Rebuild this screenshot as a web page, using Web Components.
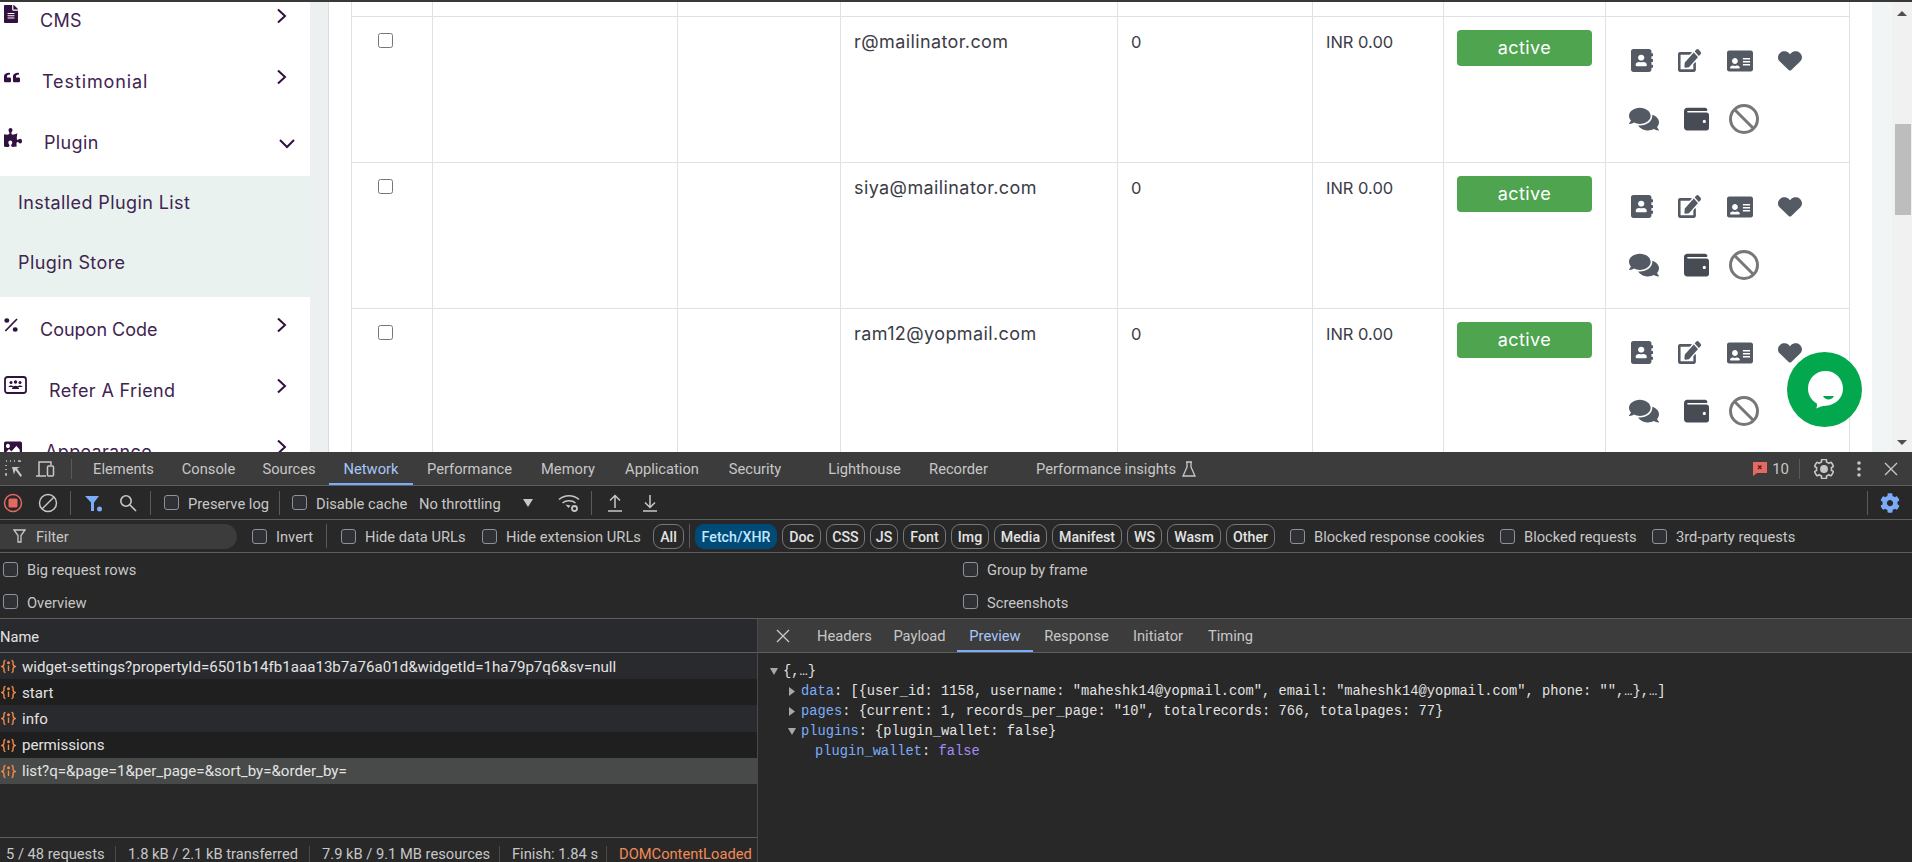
<!DOCTYPE html>
<html>
<head>
<meta charset="utf-8">
<title>Users</title>
<style>
html, body { margin: 0; padding: 0; height: 862px; overflow: hidden; background: #fff; }
</style>
</head>
<body>
<app-page></app-page>
<dev-tools></dev-tools>
<script>
const FA = {
    file: [384, "M224 136V0H24C10.7 0 0 10.7 0 24v464c0 13.3 10.7 24 24 24h336c13.3 0 24-10.7 24-24V160H248c-13.2 0-24-10.8-24-24zm64 236c0 6.6-5.4 12-12 12H108c-6.6 0-12-5.4-12-12v-8c0-6.6 5.4-12 12-12h168c6.6 0 12 5.4 12 12v8zm0-64c0 6.6-5.4 12-12 12H108c-6.6 0-12-5.4-12-12v-8c0-6.6 5.4-12 12-12h168c6.6 0 12 5.4 12 12v8zm0-72v8c0 6.6-5.4 12-12 12H108c-6.6 0-12-5.4-12-12v-8c0-6.6 5.4-12 12-12h168c6.6 0 12 5.4 12 12zm96-114.1v6.1H256V0h6.1c6.4 0 12.5 2.5 17 7l97.9 98c4.5 4.5 7 10.6 7 16.9z"],
    quote: [512, "M464 256h-80v-64c0-35.3 28.7-64 64-64h8c13.3 0 24-10.7 24-24V56c0-13.3-10.7-24-24-24h-8c-88.4 0-160 71.6-160 160v240c0 26.5 21.5 48 48 48h128c26.5 0 48-21.5 48-48V304c0-26.5-21.5-48-48-48zm-288 0H96v-64c0-35.3 28.7-64 64-64h8c13.3 0 24-10.7 24-24V56c0-13.3-10.7-24-24-24h-8C71.6 32 0 103.6 0 192v240c0 26.5 21.5 48 48 48h128c26.5 0 48-21.5 48-48V304c0-26.5-21.5-48-48-48z"],
    puzzle: [576, "M519.442 288.651c-41.519 0-59.5 31.593-82.058 31.593C377.409 320.244 432 144 432 144s-196.288 80-196.288-3.297c0-35.827 36.288-46.25 36.288-85.985C272 19.216 243.885 0 210.539 0c-34.654 0-66.366 18.891-66.366 56.346 0 41.364 31.711 59.277 31.711 81.75C175.885 207.719 0 166.758 0 166.758v333.237s178.635 41.047 178.635-28.662c0-22.473-40-40.107-40-81.471 0-37.456 29.25-56.346 63.577-56.346 33.673 0 61.788 19.216 61.788 54.717 0 39.735-36.288 50.158-36.288 85.985 0 60.803 129.675 25.73 181.23 25.73 0 0-34.725-120.101 25.827-120.101 35.962 0 46.423 36.152 86.308 36.152C556.712 416 576 387.99 576 354.443c0-34.199-18.962-65.792-56.558-65.792z"],
    percent: [448, "M90 10a80 80 0 1 0 0 160a80 80 0 1 0 0-160zM358 340a80 80 0 1 0 0 160a80 80 0 1 0 0-160zM396 20l40 32L62 492l-40-32z"],
    image: [512, "M464 448H48c-26.51 0-48-21.49-48-48V112c0-26.51 21.49-48 48-48h416c26.51 0 48 21.49 48 48v288c0 26.51-21.49 48-48 48zM112 120c-30.928 0-56 25.072-56 56s25.072 56 56 56 56-25.072 56-56-25.072-56-56-56zM64 384h384V272l-87.515-87.515c-4.686-4.686-12.284-4.686-16.971 0L208 320l-55.515-55.515c-4.686-4.686-12.284-4.686-16.971 0L64 336v48z"],
    book: [448, "M436 160c6.6 0 12-5.4 12-12v-40c0-6.600-5.400-12-12-12h-20V48c0-26.500-21.500-48-48-48H48C21.500 0 0 21.500 0 48v416c0 26.500 21.500 48 48 48h320c26.500 0 48-21.500 48-48v-48h20c6.600 0 12-5.400 12-12v-40c0-6.600-5.400-12-12-12h-20v-64h20c6.600 0 12-5.400 12-12v-40c0-6.600-5.400-12-12-12h-20v-64h20zm-228-32c35.300 0 64 28.700 64 64s-28.700 64-64 64-64-28.700-64-64 28.700-64 64-64zm112 236.800c0 10.600-10 19.200-22.400 19.200H118.400C106 384 96 375.400 96 364.800v-19.200c0-31.800 30.100-57.600 67.200-57.600h5c12.300 5.100 25.700 8 39.800 8s27.600-2.900 39.800-8h5c37.100 0 67.200 25.800 67.200 57.600v19.200z"],
    edit: [576, "M402.6 83.2l90.2 90.2c3.8 3.8 3.8 10 0 13.8L274.4 405.6l-92.8 10.3c-12.4 1.4-22.9-9.1-21.5-21.5l10.3-92.8L388.8 83.2c3.8-3.8 10-3.8 13.8 0zm162-22.9l-48.8-48.8c-15.2-15.2-39.9-15.2-55.2 0l-35.4 35.4c-3.8 3.8-3.8 10 0 13.8l90.2 90.2c3.8 3.8 10 3.8 13.8 0l35.4-35.4c15.2-15.3 15.2-40 0-55.2zM384 346.2V448H64V128h229.8c3.2 0 6.2-1.3 8.5-3.5l40-40c7.6-7.6 2.2-20.5-8.5-20.5H48C21.5 64 0 85.5 0 112v352c0 26.5 21.5 48 48 48h352c26.5 0 48-21.5 48-48V306.2c0-10.7-12.9-16-20.500-8.500l-40 40c-2.200 2.300-3.500 5.300-3.500 8.500z"],
    card: [576, "M528 32H48C21.5 32 0 53.5 0 80v60h576V80c0-26.5-21.500-48-48-48zM0 432c0 26.500 21.500 48 48 48h480c26.500 0 48-21.500 48-48V128H0v304zm352-232c0-4.400 3.600-8 8-8h144c4.400 0 8 3.600 8 8v16c0 4.400-3.600 8-8 8H360c-4.400 0-8-3.600-8-8v-16zm0 64c0-4.400 3.600-8 8-8h144c4.400 0 8 3.600 8 8v16c0 4.400-3.600 8-8 8H360c-4.400 0-8-3.600-8-8v-16zm0 64c0-4.400 3.600-8 8-8h144c4.400 0 8 3.600 8 8v16c0 4.400-3.600 8-8 8H360c-4.400 0-8-3.600-8-8v-16zM176 192c35.300 0 64 28.700 64 64s-28.700 64-64 64-64-28.700-64-64 28.700-64 64-64zM67.100 396.200C75.500 370.500 99.600 352 128 352h8.200c12.300 5.100 25.700 8 39.800 8s27.600-2.900 39.800-8h8.200c28.400 0 52.500 18.500 60.900 44.200 3.200 9.900-5.200 19.800-15.600 19.800H82.700c-10.400 0-18.800-10-15.600-19.800z"],
    heart: [512, "M462.3 62.6C407.5 15.9 326 24.3 275.700 76.200L256 96.500l-19.700-20.300C186.100 24.300 104.500 15.900 49.700 62.600c-62.800 53.600-66.100 149.800-9.900 207.900l193.500 199.800c12.500 12.900 32.800 12.900 45.300 0l193.500-199.800c56.300-58.100 53-154.300-9.900-207.900z"],
    comments: [576, "M416 192c0-88.400-93.100-160-208-160S0 103.600 0 192c0 34.300 14.100 65.900 38 92-13.400 30.200-35.500 54.200-35.800 54.500-2.200 2.300-2.800 5.700-1.500 8.700S4.800 352 8 352c36.600 0 66.900-12.300 88.700-25 32.200 15.700 70.300 25 111.300 25 114.900 0 208-71.600 208-160zm122 220c23.900-26 38-57.700 38-92 0-66.900-53.500-124.200-129.300-148.100.9 6.600 1.300 13.300 1.300 20.100 0 105.900-107.700 192-240 192-10.800 0-21.300-.8-31.700-1.900C207.800 439.600 281.800 480 368 480c41 0 79.100-9.200 111.300-25 21.800 12.700 52.100 25 88.700 25 3.200 0 6.100-1.900 7.400-4.800 1.300-3 .7-6.400-1.500-8.700-.3-.3-22.400-24.200-35.800-54.500z"],
    wallet: [512, "M461.200 128H80c-8.840 0-16-7.160-16-16s7.160-16 16-16h384c8.840 0 16-7.160 16-16 0-26.510-21.490-48-48-48H64C28.650 32 0 60.650 0 96v320c0 35.350 28.650 64 64 64h397.200c28.020 0 50.800-21.530 50.800-48V176c0-26.470-22.780-48-50.800-48zM416 336c-17.670 0-32-14.330-32-32s14.330-32 32-32 32 14.330 32 32-14.330 32-32 32z"],
    cog: [512, "M487.400 315.700l-42.600-24.600c4.300-23.200 4.300-47 0-70.200l42.600-24.600c4.900-2.800 7.100-8.600 5.500-14-11.100-35.600-30-67.800-54.700-94.600-3.800-4.100-10-5.100-14.800-2.300L380.800 110c-17.900-15.400-38.500-27.300-60.800-35.100V25.800c0-5.600-3.900-10.500-9.400-11.700-36.700-8.200-74.300-7.800-109.200 0-5.500 1.200-9.400 6.100-9.400 11.700V75c-22.200 7.900-42.800 19.800-60.800 35.100L88.700 85.500c-4.900-2.800-11-1.900-14.800 2.300-24.700 26.700-43.600 58.900-54.700 94.600-1.700 5.400.6 11.200 5.500 14L67.300 221c-4.300 23.200-4.300 47 0 70.200l-42.600 24.600c-4.900 2.800-7.100 8.600-5.500 14 11.100 35.600 30 67.800 54.700 94.600 3.800 4.100 10 5.100 14.800 2.300l42.600-24.600c17.900 15.400 38.500 27.300 60.800 35.100v49.200c0 5.600 3.900 10.500 9.400 11.700 36.700 8.200 74.300 7.800 109.200 0 5.500-1.200 9.400-6.100 9.400-11.700v-49.200c22.200-7.900 42.800-19.800 60.800-35.100l42.600 24.600c4.900 2.800 11 1.900 14.800-2.300 24.700-26.700 43.600-58.900 54.700-94.600 1.500-5.500-.7-11.300-5.600-14.100zM256 336c-44.100 0-80-35.900-80-80s35.900-80 80-80 80 35.900 80 80-35.900 80-80 80z"]
};
const fa = (name, w, h, color) => `<svg width="${w}" height="${h}" viewBox="0 0 ${FA[name][0]} 512" preserveAspectRatio="none" style="display:block;flex:none"><path fill="${color}" d="${FA[name][1]}"/></svg>`;

class NavItem extends HTMLElement {
    connectedCallback() {
        const icon = this.getAttribute("icon");
        const [w, h] = this.getAttribute("size").split(",");
        const open = this.hasAttribute("open");
        const glyph = icon === "refer"
            ? `<svg width="23" height="18" viewBox="0 0 23 18" style="display:block"><rect x="1" y="1" width="21" height="16" rx="2.500" fill="none" stroke="#32103f" stroke-width="1.800"/><g fill="#32103f"><circle cx="7" cy="6.500" r="1.500"/><circle cx="11.500" cy="6" r="1.700"/><circle cx="16" cy="6.500" r="1.500"/><path d="M4.500 11c0-2 5-2 5 0zM8 13c0-4.500 7-4.500 7 0zM13.500 11c0-2 5-2 5 0z"/></g></svg>`
            : fa(icon, w, h, "#32103f");
        this.attachShadow({mode: "open"}).innerHTML = `
        <style>
        :host { display: flex; align-items: center; height: 61px; padding-left: 4px; box-sizing: border-box; position: relative; font: 18px Inter, sans-serif; letter-spacing: .35px; color: #3f2450; }
        .icon { width: 0; height: ${h}px; margin-bottom: ${this.getAttribute("lift") || 13}px; display: block; }
        .text { margin-left: ${this.getAttribute("x")}px; margin-top: -1px; }
        .arrow { margin-left: auto; margin-right: ${open ? 14 : 23}px; margin-bottom: ${open ? -2 : 10}px; }
        </style>
        <span class="icon">${glyph}</span>
        <span class="text"><slot></slot></span>
        <svg class="arrow" width="${open ? 18 : 11}" height="${open ? 11 : 16}" viewBox="${open ? "0 0 18 11" : "0 0 11 16"}"><path d="${open ? "M2 2l7 7 7-7" : "M2 1.500l7 6.500-7 6.500"}" fill="none" stroke="#32103f" stroke-width="2"/></svg>`;
    }
}
customElements.define("nav-item", NavItem);

class SubItem extends HTMLElement {
    constructor() {
        super();
        this.attachShadow({mode: "open"}).innerHTML = `
        <style>
        :host { display: flex; align-items: center; height: 60.500px; box-sizing: border-box; padding: 0 0 8px 18px; font: 18px Inter, sans-serif; letter-spacing: .4px; color: #3f2450; }
        </style>
        <slot></slot>`;
    }
}
customElements.define("sub-item", SubItem);

class AppSidebar extends HTMLElement {
    constructor() {
        super();
        this.attachShadow({mode: "open"}).innerHTML = `
        <style>
        :host { display: block; width: 310px; flex: none; background: #fff; overflow: hidden; }
        .list { margin-top: -12px; }
        .sub { background: #e9f2ee; margin: 3px 0 2px; }
        </style>
        <div class="list">
            <nav-item icon="file" size="14,18" x="36">CMS</nav-item>
            <nav-item icon="quote" size="16,11" x="38" lift="9" style="letter-spacing:.9px">Testimonial</nav-item>
            <nav-item icon="puzzle" size="18,19" x="40" lift="11" open>Plugin</nav-item>
            <div class="sub">
                <sub-item>Installed Plugin List</sub-item>
                <sub-item>Plugin Store</sub-item>
            </div>
            <nav-item icon="percent" size="14,14" x="36" lift="10" style="letter-spacing:0">Coupon Code</nav-item>
            <nav-item icon="refer" size="23,18" x="45" lift="11">Refer A Friend</nav-item>
            <nav-item icon="image" size="18,20" x="41" lift="6">Appearance</nav-item>
        </div>`;
    }
}
customElements.define("app-sidebar", AppSidebar);

class ActionIcons extends HTMLElement {
    constructor() {
        super();
        const c = "#545a64";
        this.attachShadow({mode: "open"}).innerHTML = `
        <style>
        :host { display: block; padding-top: 14px; }
        .line { display: flex; align-items: center; height: 59px; }
        .b { margin-top: -1px; }
        .a svg:nth-child(1) { margin-left: 25px; }
        .a svg:nth-child(2) { margin-left: 25px; }
        .a svg:nth-child(3) { margin-left: 26px; }
        .a svg:nth-child(4) { margin-left: 25px; }
        .b svg:nth-child(1) { margin-left: 23px; }
        .b svg:nth-child(2) { margin-left: 25px; }
        .b svg:nth-child(3) { margin-left: 20px; }
        </style>
        <div class="line a">${fa("book", 22, 23, c)}${fa("edit", 23, 23, c)}${fa("card", 26, 24, c)}${fa("heart", 24, 22, c)}</div>
        <div class="line b">${fa("comments", 30, 26, c)}${fa("wallet", 25, 26, "#474b54")}
            <svg width="30" height="30" viewBox="0 0 30 30" style="display:block"><circle cx="15" cy="15" r="13.500" fill="none" stroke="#777" stroke-width="3"/><path d="M5.500 5.500l19 19" stroke="#777" stroke-width="3"/></svg>
        </div>`;
    }
}
customElements.define("action-icons", ActionIcons);

class UserRow extends HTMLElement {
    constructor() {
        super();
        this.attachShadow({mode: "open"}).innerHTML = `
        <style>
        :host { display: grid; grid-template-columns: 81px 245px 163px 277px 195px 131px 162px 244px; width: 1499px; height: 146px; box-sizing: border-box; border-bottom: 1px solid #dee2e6; border-left: 1px solid #dee2e6; font: 18px Inter, sans-serif; letter-spacing: .4px; color: #3c3c46; }
        .cell { border-right: 1px solid #dee2e6; padding: 13px 0 0 13px; line-height: 24px; min-width: 0; }
        .check { padding: 0 0 0 26px; }
        .check i { display: block; width: 13px; height: 13px; margin-top: 16px; border: 1px solid #767676; border-radius: 2.500px; background: #fff; }
        .num { font-size: 16.500px; letter-spacing: 0; }
        .status { padding-left: 13px; }
        .status span { display: flex; align-items: center; justify-content: center; width: 135px; height: 36px; border-radius: 4px; background: #4ea44f; color: #fff; }
        .actions { padding: 0; }
        </style>
        <div class="cell check"><i></i></div>
        <div class="cell"></div>
        <div class="cell"></div>
        <div class="cell"><slot></slot></div>
        <div class="cell num">0</div>
        <div class="cell num">INR 0.00</div>
        <div class="cell status"><span>active</span></div>
        <div class="cell actions"><action-icons></action-icons></div>`;
    }
}
customElements.define("user-row", UserRow);

class UserTable extends HTMLElement {
    constructor() {
        super();
        this.attachShadow({mode: "open"}).innerHTML = `
        <style>
        :host { display: block; flex: 1; min-width: 0; padding-left: 22px; background: #fff; overflow: hidden; }
        .top { display: grid; grid-template-columns: 81px 245px 163px 277px 195px 131px 162px 244px; width: 1499px; height: 15px; box-sizing: border-box; border-bottom: 1px solid #dee2e6; border-left: 1px solid #dee2e6; }
        .top div { border-right: 1px solid #dee2e6; }
        </style>
        <div class="top"><div></div><div></div><div></div><div></div><div></div><div></div><div></div><div></div></div>
        <slot></slot>`;
    }
}
customElements.define("user-table", UserTable);

class PageScrollbar extends HTMLElement {
    constructor() {
        super();
        this.attachShadow({mode: "open"}).innerHTML = `
        <style>
        :host { display: flex; flex: none; width: 40px; }
        .gutter { width: 20px; background: #f2f5f6; }
        .bar { width: 20px; background: #f1f1f1; display: flex; flex-direction: column; align-items: center; padding-top: 9px; box-sizing: border-box; }
        .thumb { width: 16px; height: 91px; margin: 108px 0 0 2px; background: #bdbdbd; }
        .up, .down { width: 0; height: 0; border-left: 5px solid transparent; border-right: 5px solid transparent; }
        .up { border-bottom: 5px solid #505050; }
        .down { border-top: 5px solid #505050; margin-top: auto; margin-bottom: 7px; }
        </style>
        <div class="gutter"></div>
        <div class="bar"><i class="up"></i><i class="thumb"></i><i class="down"></i></div>`;
    }
}
customElements.define("page-scrollbar", PageScrollbar);

class ChatBubble extends HTMLElement {
    constructor() {
        super();
        this.attachShadow({mode: "open"}).innerHTML = `
        <style>
        :host { position: absolute; left: 1787px; top: 350px; width: 75px; height: 75px; display: block; }
        </style>
        <svg width="75" height="75" viewBox="0 0 75 75" style="display:block">
            <circle cx="37.500" cy="37.500" r="37.500" fill="#03a84e"/>
            <path d="M38.500 19c9.800 0 17.500 7.700 17.500 17.500 0 9.600-7.600 16.500-17 17.200-3.500.3-6.500 1.100-9.800 2.800.8-1.800 1-3.500.6-5.100C24.400 48.300 21 43 21 36.500 21 26.700 28.700 19 38.500 19z" fill="#fff"/>
            <path d="M36 44h11c-1 2.300-3 3.500-5.500 3.500S37 46.300 36 44z" fill="#03a84e"/>
        </svg>`;
    }
}
customElements.define("chat-bubble", ChatBubble);

class AppPage extends HTMLElement {
    constructor() {
        super();
        this.attachShadow({mode: "open"}).innerHTML = `
        <style>
        :host { display: flex; height: 452px; box-sizing: border-box; border-top: 2px solid #383838; overflow: hidden; position: relative; }
        .gutter { width: 18px; flex: none; background: #ecf0f1; border-right: 1px solid #dcdcdc; }
        </style>
        <app-sidebar></app-sidebar>
        <div class="gutter"></div>
        <user-table>
            <user-row>r@mailinator.com</user-row>
            <user-row>siya@mailinator.com</user-row>
            <user-row>ram12@yopmail.com</user-row>
        </user-table>
        <page-scrollbar></page-scrollbar>
        <chat-bubble></chat-bubble>`;
    }
}
customElements.define("app-page", AppPage);

/* devtools bits */
class DtTab extends HTMLElement {
    constructor() {
        super();
        this.attachShadow({mode: "open"}).innerHTML = `
        <style>
        :host { display: flex; align-items: center; justify-content: center; flex: none; height: 100%; box-sizing: border-box; padding-top: 1px; color: #c7c7c7; white-space: nowrap; }
        :host([active]) { color: #a8c7fa; box-shadow: inset 0 -2px 0 #7cacf8; }
        </style>
        <slot></slot>`;
    }
}
customElements.define("dt-tab", DtTab);

class DtCheck extends HTMLElement {
    constructor() {
        super();
        this.attachShadow({mode: "open"}).innerHTML = `
        <style>
        :host { display: flex; align-items: center; flex: none; height: 100%; color: #c7c7c7; white-space: nowrap; }
        i { display: block; width: 13px; height: 13px; margin-right: 9px; flex: none; border: 1px solid #8e9199; border-radius: 3px; background: #303134; }
        span { padding-top: 2px; }
        </style>
        <i></i><span><slot></slot></span>`;
    }
}
customElements.define("dt-check", DtCheck);

class DtPill extends HTMLElement {
    constructor() {
        super();
        this.attachShadow({mode: "open"}).innerHTML = `
        <style>
        :host { display: flex; align-items: center; justify-content: center; flex: none; height: 25px; box-sizing: border-box; margin-left: 5px; padding-top: 2px; border: 1px solid #74777d; border-radius: 9px; font-weight: 500; font-size: 14.200px; color: #e3e3e3; }
        :host([active]) { border-color: #004a77; background: #004a77; color: #c2e7ff; }
        </style>
        <slot></slot>`;
    }
}
customElements.define("dt-pill", DtPill);

class DtBtn extends HTMLElement {
    connectedCallback() {
        const w = this.getAttribute("w");
        const kinds = {
            inspect: `<svg width="18" height="18" viewBox="0 0 18 18" fill="none" stroke="#c7c7c7" stroke-width="1.500"><path d="M1 1h1M5 1h1M9 1h1M13 1h2v1M1 5v1M1 9v1M1 13v2h1"/><path d="M7 7h8l-3 1.500 5 7-1.500 1.500-5-7-1.500 4.500z" fill="#c7c7c7" stroke="none"/></svg>`,
            device: `<svg width="20" height="18" viewBox="0 0 20 18" fill="none" stroke="#c7c7c7" stroke-width="1.500"><path d="M1 16h10M4 16V2h12v3"/><rect x="12.500" y="6" width="6" height="10" rx="1"/></svg>`,
            record: `<svg width="20" height="20" viewBox="0 0 20 20"><circle cx="10" cy="10" r="8.500" fill="none" stroke="#e46962" stroke-width="1.500"/><rect x="5.500" y="5.500" width="9" height="9" rx="1.500" fill="#e46962"/></svg>`,
            clear: `<svg width="20" height="20" viewBox="0 0 20 20" fill="none" stroke="#c7c7c7" stroke-width="1.500"><circle cx="10" cy="10" r="8.500"/><path d="M4 16L16 4"/></svg>`,
            funnel: `<svg width="18" height="18" viewBox="0 0 18 18"><path d="M0 2h14L9 8.500V17H6V8.500z" fill="#7cacf8"/><circle cx="14.500" cy="15" r="2.500" fill="#7cacf8"/></svg>`,
            search: `<svg width="18" height="18" viewBox="0 0 18 18" fill="none" stroke="#c7c7c7" stroke-width="1.600"><circle cx="7" cy="7" r="5.200"/><path d="M11 11l6 6"/></svg>`,
            arrow: `<svg width="10" height="8" viewBox="0 0 10 8"><path d="M0 0h10L5 8z" fill="#c7c7c7"/></svg>`,
            wifi: `<svg width="22" height="20" viewBox="0 0 22 20" fill="none" stroke="#c7c7c7" stroke-width="1.500"><path d="M1 6.500c5.500-5 14.500-5 20 0M4.500 10c3.500-3 9.500-3 13 0"/><path d="M7.500 11.500l3 3.500 2-2.500z" fill="#c7c7c7" stroke="none"/><circle cx="16.500" cy="15.500" r="2.500" stroke-width="1.800"/></svg>`,
            upload: `<svg width="16" height="20" viewBox="0 0 16 20" fill="none" stroke="#c7c7c7" stroke-width="1.500"><path d="M8 15V3M3 7.500L8 2.500l5 5M1 18h14"/></svg>`,
            download: `<svg width="16" height="20" viewBox="0 0 16 20" fill="none" stroke="#c7c7c7" stroke-width="1.500"><path d="M8 2v12M3 9.500l5 5 5-5M1 18h14"/></svg>`,
            flask: `<svg width="14" height="16" viewBox="0 0 14 16" fill="none" stroke="#c7c7c7" stroke-width="1.300"><path d="M4 1h6M5 1v5L1 15h12L9 6V1"/></svg>`,
            issue: `<svg width="14" height="14" viewBox="0 0 14 14"><path d="M0 0h14v11H4l-4 3z" fill="#e46962"/><path d="M5 3.500l3.500 3.500M8.500 3.500L5 7" stroke="#5c1c18" stroke-width="1.200"/></svg>`,
            gear: `<svg width="20" height="20" viewBox="0 0 512 512"><path d="${FA.cog[1]}" fill="none" stroke="#c7c7c7" stroke-width="42"/><circle cx="256" cy="256" r="72" fill="#c7c7c7"/></svg>`,
            bluegear: fa("cog", 20, 20, "#7cacf8"),
            dots: `<svg width="4" height="16" viewBox="0 0 4 16"><circle cx="2" cy="2" r="1.800" fill="#c7c7c7"/><circle cx="2" cy="8" r="1.800" fill="#c7c7c7"/><circle cx="2" cy="14" r="1.800" fill="#c7c7c7"/></svg>`,
            close: `<svg width="14" height="14" viewBox="0 0 14 14"><path d="M1 1l12 12M13 1L1 13" stroke="#c7c7c7" stroke-width="1.400"/></svg>`,
            filter: `<svg width="13" height="14" viewBox="0 0 13 14" fill="none" stroke="#c7c7c7" stroke-width="1.300"><path d="M1 1h11L8 6.500V13H5V6.500z"/></svg>`
        };
        this.attachShadow({mode: "open"}).innerHTML = `
        <style>
        :host { display: flex; align-items: center; justify-content: center; flex: none; width: ${w}px; height: 100%; }
        </style>
        ${kinds[this.getAttribute("kind")]}`;
    }
}
customElements.define("dt-btn", DtBtn);

class DtSep extends HTMLElement {
    constructor() {
        super();
        this.attachShadow({mode: "open"}).innerHTML = `
        <style>
        :host { display: block; flex: none; width: 1px; height: 24px; background: #5a5a5a; }
        </style>`;
    }
}
customElements.define("dt-sep", DtSep);

class DtBar extends HTMLElement {
    constructor() {
        super();
        this.attachShadow({mode: "open"}).innerHTML = `
        <style>
        :host { display: flex; align-items: center; flex: none; box-sizing: border-box; border-bottom: 1px solid #5e5e5e; }
        </style>
        <slot></slot>`;
    }
}
customElements.define("dt-bar", DtBar);

class RequestRow extends HTMLElement {
    constructor() {
        super();
        this.attachShadow({mode: "open"}).innerHTML = `
        <style>
        :host { display: flex; align-items: center; height: 26.200px; box-sizing: border-box; padding-top: 1px; background: #292a2d; color: #e3e3e3; white-space: nowrap; font-size: 15.100px; }
        :host([alt]) { background: #1f1f1f; }
        :host([selected]) { background: #474a48; }
        svg { margin: 0 6px 0 1px; flex: none; }
        </style>
        <svg width="15" height="15" viewBox="0 0 15 15" fill="none" stroke="#f08a4b" stroke-width="1.400"><path d="M4.500 1.500C2.500 1.500 3 3.500 3 5S2.500 7 1 7.500C2.500 8 3 8.500 3 10s-.5 3.500 1.500 3.500M10.500 1.500C12.500 1.500 12 3.500 12 5s.5 2 2 2.500C12.500 8 12 8.500 12 10s.5 3.500-1.500 3.500M7.500 6.500V12"/><circle cx="7.500" cy="3.800" r=".8" fill="#f08a4b"/></svg>
        <slot></slot>`;
    }
}
customElements.define("request-row", RequestRow);

class JsonLine extends HTMLElement {
    connectedCallback() {
        const arrow = this.getAttribute("arrow");
        const shapes = { down: "M0 1h8L4 8z", right: "M1 0l6 4.500L1 9z" };
        this.attachShadow({mode: "open"}).innerHTML = `
        <style>
        :host { display: flex; align-items: center; height: 20px; padding-left: ${this.getAttribute("x")}px; white-space: pre; font: 13.730px "Liberation Mono", monospace; color: #e3e3e3; }
        svg { flex: none; width: 8px; height: 9px; margin-right: 5px; }
        ::slotted(.k) { color: #7cacf8; }
        ::slotted(.f) { color: #a68bf9; }
        </style>
        ${arrow ? `<svg viewBox="0 0 8 9"><path d="${shapes[arrow]}" fill="#a8a8a8"/></svg>` : ""}
        <slot></slot>`;
    }
}
customElements.define("json-line", JsonLine);

class DevTools extends HTMLElement {
    constructor() {
        super();
        this.attachShadow({mode: "open"}).innerHTML = `
        <style>
        :host { display: flex; flex-direction: column; height: 410px; overflow: hidden; background: #282828; font: 14.700px Roboto, sans-serif; color: #c7c7c7; }
        .tabs { height: 34px; background: #3c3c3c; }
        .row { height: 34px; }
        .row3 { height: 33px; }
        .nudge { padding-top: 2px; }
        .filter { display: flex; align-items: center; width: 237px; height: 25px; flex: none; background: #3c3c3c; border-radius: 0 13px 13px 0; }
        .settings { display: grid; grid-template-columns: 960px 1fr; grid-auto-rows: 32.500px; height: 65px; flex: none; padding-left: 3px; border-bottom: 1px solid #5e5e5e; }
        .panes { display: flex; flex: 1; min-height: 0; }
        .left { display: flex; flex-direction: column; width: 758px; flex: none; box-sizing: border-box; border-right: 1px solid #4a4a4a; background: #282828; }
        .name { display: flex; align-items: center; height: 34px; flex: none; box-sizing: border-box; padding-top: 2px; background: #292a2d; border-bottom: 1px solid #5e5e5e; color: #e3e3e3; }
        .list { flex: 1; }
        .status { display: flex; align-items: flex-start; height: 25px; flex: none; box-sizing: border-box; border-top: 1px solid #5e5e5e; padding-top: 8px; white-space: nowrap; overflow: hidden; }
        .status span { flex: none; height: 16px; line-height: 16px; box-sizing: border-box; padding-left: 12px; border-right: 1px solid #4a4a4a; }
        .status .load { border: 0; color: #f28b54; }
        .right { flex: 1; min-width: 0; }
        .sub { display: flex; align-items: stretch; height: 34px; box-sizing: border-box; background: #3c3c3c; border-bottom: 1px solid #5e5e5e; }
        .tree { padding-top: 8px; }
        </style>
        <dt-bar class="tabs">
            <dt-btn kind="inspect" w="27"></dt-btn>
            <dt-btn kind="device" w="36"></dt-btn>
            <dt-sep style="margin-left:8px;height:20px"></dt-sep>
            <dt-tab style="width:96px;margin:0 -3.500px 0 3.500px">Elements</dt-tab>
            <dt-tab style="width:81px">Console</dt-tab>
            <dt-tab style="width:80px">Sources</dt-tab>
            <dt-tab style="width:84px" active>Network</dt-tab>
            <dt-tab style="width:113px">Performance</dt-tab>
            <dt-tab style="width:84px">Memory</dt-tab>
            <dt-tab style="width:104px">Application</dt-tab>
            <dt-tab style="width:100px;margin:0 9px 0 -9px">Security</dt-tab>
            <dt-tab style="width:101px">Lighthouse</dt-tab>
            <dt-tab style="width:107px;margin:0 10px 0 -10px">Recorder</dt-tab>
            <dt-tab style="width:152px;margin-left:14px;justify-content:flex-start">Performance insights</dt-tab>
            <dt-btn kind="flask" w="14" style="margin-left:-6px"></dt-btn>
            <dt-btn kind="issue" w="14" style="margin-left:auto"></dt-btn>
            <span style="margin-left:5px;font-size:15px">10</span>
            <dt-sep style="margin-left:10px;height:20px"></dt-sep>
            <dt-btn kind="gear" w="47"></dt-btn>
            <dt-btn kind="dots" w="23"></dt-btn>
            <dt-btn kind="close" w="42"></dt-btn>
        </dt-bar>
        <dt-bar class="row">
            <dt-btn kind="record" w="26"></dt-btn>
            <dt-btn kind="clear" w="44"></dt-btn>
            <dt-sep></dt-sep>
            <dt-btn kind="funnel" w="46"></dt-btn>
            <dt-btn kind="search" w="22"></dt-btn>
            <dt-sep style="margin-left:11px"></dt-sep>
            <dt-check style="width:115px;margin-left:13px">Preserve log</dt-check>
            <dt-sep></dt-sep>
            <dt-check style="width:127px;margin-left:12px">Disable cache</dt-check>
            <span class="nudge" style="width:95px;flex:none">No throttling</span>
            <dt-btn kind="arrow" w="28"></dt-btn>
            <dt-btn kind="wifi" w="54"></dt-btn>
            <dt-sep style="margin-left:-5px"></dt-sep>
            <dt-btn kind="upload" w="46"></dt-btn>
            <dt-btn kind="download" w="24"></dt-btn>
            <dt-sep style="margin-left:auto"></dt-sep>
            <dt-btn kind="bluegear" w="36" style="margin:0 4px"></dt-btn>
        </dt-bar>
        <dt-bar class="row row3">
            <div class="filter"><dt-btn kind="filter" w="34" style="height:25px;padding-left:2px"></dt-btn><span class="nudge">Filter</span></div>
            <dt-check style="width:74px;margin-left:15px">Invert</dt-check>
            <dt-sep></dt-sep>
            <dt-check style="width:141px;margin-left:14px">Hide data URLs</dt-check>
            <dt-check style="width:171px">Hide extension URLs</dt-check>
            <dt-pill style="width:31px;margin-left:0">All</dt-pill>
            <dt-sep style="margin-left:5px"></dt-sep>
            <dt-pill style="width:82px" active>Fetch/XHR</dt-pill>
            <dt-pill style="width:39px">Doc</dt-pill>
            <dt-pill style="width:39px">CSS</dt-pill>
            <dt-pill style="width:28px">JS</dt-pill>
            <dt-pill style="width:43px">Font</dt-pill>
            <dt-pill style="width:38px">Img</dt-pill>
            <dt-pill style="width:53px">Media</dt-pill>
            <dt-pill style="width:70px">Manifest</dt-pill>
            <dt-pill style="width:35px">WS</dt-pill>
            <dt-pill style="width:54px">Wasm</dt-pill>
            <dt-pill style="width:49px">Other</dt-pill>
            <dt-check style="width:210px;margin-left:15px">Blocked response cookies</dt-check>
            <dt-check style="width:152px">Blocked requests</dt-check>
            <dt-check>3rd-party requests</dt-check>
        </dt-bar>
        <div class="settings">
            <dt-check>Big request rows</dt-check>
            <dt-check>Group by frame</dt-check>
            <dt-check>Overview</dt-check>
            <dt-check>Screenshots</dt-check>
        </div>
        <div class="panes">
            <div class="left">
                <div class="name">Name</div>
                <div class="list">
                    <request-row>widget-settings?propertyId=6501b14fb1aaa13b7a76a01d&amp;widgetId=1ha79p7q6&amp;sv=null</request-row>
                    <request-row alt>start</request-row>
                    <request-row>info</request-row>
                    <request-row alt>permissions</request-row>
                    <request-row selected>list?q=&amp;page=1&amp;per_page=&amp;sort_by=&amp;order_by=</request-row>
                </div>
                <div class="status">
                    <span style="width:116px;padding-left:6px">5 / 48 requests</span>
                    <span style="width:194px">1.8 kB / 2.1 kB transferred</span>
                    <span style="width:190px">7.9 kB / 9.1 MB resources</span>
                    <span style="width:107px">Finish: 1.84 s</span>
                    <span class="load">DOMContentLoaded</span>
                </div>
            </div>
            <div class="right">
                <div class="sub">
                    <dt-btn kind="close" w="50"></dt-btn>
                    <dt-tab style="width:75px;margin-left:-1px">Headers</dt-tab>
                    <dt-tab style="width:75px">Payload</dt-tab>
                    <dt-tab style="width:76px" active>Preview</dt-tab>
                    <dt-tab style="width:87px">Response</dt-tab>
                    <dt-tab style="width:76px">Initiator</dt-tab>
                    <dt-tab style="width:69px">Timing</dt-tab>
                </div>
                <div class="tree">
                    <json-line x="13" arrow="down" style="margin-left:-1px">{,…}</json-line>
                    <json-line x="30" arrow="right"><span class="k">data</span>: [{user_id: 1158, username: "maheshk14@yopmail.com", email: "maheshk14@yopmail.com", phone: "",…},…]</json-line>
                    <json-line x="30" arrow="right"><span class="k">pages</span>: {current: 1, records_per_page: "10", totalrecords: 766, totalpages: 77}</json-line>
                    <json-line x="30" arrow="down"><span class="k">plugins</span>: {plugin_wallet: false}</json-line>
                    <json-line x="57"><span class="k">plugin_wallet</span>: <span class="f">false</span></json-line>
                </div>
            </div>
        </div>`;
    }
}
customElements.define("dev-tools", DevTools);
</script>
</body>
</html>
